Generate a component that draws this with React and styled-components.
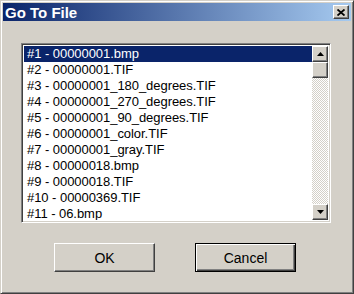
import React from "react";
import styled, { createGlobalStyle } from "styled-components";

const GlobalStyle = createGlobalStyle`
  html, body {
    margin: 0;
    padding: 0;
    background: #d4d0c8;
  }
  body {
    font-family: "Liberation Sans", Arial, sans-serif;
  }
`;

const Window = styled.div`
  box-sizing: border-box;
  width: 354px;
  height: 294px;
  background: #d4d0c8;
  border: 1px solid;
  border-color: #d4d0c8 #404040 #404040 #d4d0c8;
  box-shadow: inset 1px 1px 0 #fff, inset -1px -1px 0 #808080;
  padding: 2px;
  display: flex;
  flex-direction: column;
`;

const TitleBar = styled.div`
  height: 18px;
  background: linear-gradient(to right, #0a246a, #a6caf0);
  display: flex;
  align-items: center;
  justify-content: space-between;
  padding: 0 2px 0 2px;
`;

const Title = styled.span`
  color: #fff;
  font-weight: bold;
  font-size: 15px;
`;

const Raised = styled.div`
  box-sizing: border-box;
  background: #d4d0c8;
  border: 1px solid;
  border-color: #fff #404040 #404040 #fff;
  box-shadow: inset -1px -1px 0 #808080;
  display: flex;
  align-items: center;
  justify-content: center;
`;

const CloseButton = styled(Raised)`
  width: 16px;
  height: 14px;
`;

const Body = styled.div`
  flex: 1;
  display: flex;
  flex-direction: column;
  padding: 22px 20px 0 18px;
  gap: 20px;
`;

const ListBox = styled.div`
  box-sizing: border-box;
  height: 180px;
  border: 1px solid;
  border-color: #808080 #fff #fff #808080;
  box-shadow: inset 1px 1px 0 #404040, inset -1px -1px 0 #d4d0c8;
  padding: 2px;
  display: flex;
  background: #fff;
`;

const Items = styled.ul`
  flex: 1;
  list-style: none;
  margin: 0;
  padding: 0;
  overflow: hidden;
`;

const Item = styled.li`
  height: 16px;
  line-height: 16px;
  padding-left: 3px;
  font-size: 13px;
  letter-spacing: -0.05px;
  white-space: nowrap;
  color: ${(p) => (p.$selected ? "#fff" : "#000")};
  background: ${(p) => (p.$selected ? "#0a246a" : "transparent")};
`;

const ScrollBar = styled.div`
  width: 16px;
  display: flex;
  flex-direction: column;
  background-image: conic-gradient(#fff 90deg, #d4d0c8 90deg 180deg, #fff 180deg 270deg, #d4d0c8 270deg);
  background-size: 2px 2px;
`;

const ScrollButton = styled(Raised)`
  width: 16px;
  height: 16px;
  flex: none;
`;

const Track = styled.div`
  flex: 1;
`;

const ButtonRow = styled.div`
  display: flex;
  gap: 40px;
  padding-left: 33px;
`;

const Button = styled(Raised)`
  width: 101px;
  height: 29px;
  font-size: 14px;
  color: #000;
  ${(p) =>
    p.$default &&
    `
    border: 1px solid #000;
    box-shadow: inset 1px 1px 0 #fff, inset -1px -1px 0 #404040, inset -2px -2px 0 #808080;
  `}
`;

const files = [
  "00000001.bmp",
  "00000001.TIF",
  "00000001_180_degrees.TIF",
  "00000001_270_degrees.TIF",
  "00000001_90_degrees.TIF",
  "00000001_color.TIF",
  "00000001_gray.TIF",
  "00000018.bmp",
  "00000018.TIF",
  "00000369.TIF",
  "06.bmp",
];

const Arrow = ({ down }) => (
  <svg width="7" height="4" viewBox="0 0 7 4">
    <path d={down ? "M0 0H7L3.5 4Z" : "M0 4H7L3.5 0Z"} fill="#000" />
  </svg>
);

const App = () => {
  return (
    <>
      <GlobalStyle />
      <Window>
        <TitleBar>
          <Title>Go To File</Title>
          <CloseButton>
            <svg width="8" height="7" viewBox="0 0 8 7">
              <path d="M0.5 0.5L7.5 6.5M7.5 0.5L0.5 6.5" stroke="#000" strokeWidth="1.8" />
            </svg>
          </CloseButton>
        </TitleBar>
        <Body>
          <ListBox>
            <Items>
              {files.map((f, i) => (
                <Item key={i} $selected={i === 0}>
                  #{i + 1} - {f}
                </Item>
              ))}
            </Items>
            <ScrollBar>
              <ScrollButton>
                <Arrow />
              </ScrollButton>
              <ScrollButton />
              <Track />
              <ScrollButton>
                <Arrow down />
              </ScrollButton>
            </ScrollBar>
          </ListBox>
          <ButtonRow>
            <Button>OK</Button>
            <Button $default>Cancel</Button>
          </ButtonRow>
        </Body>
      </Window>
    </>
  );
};

export default App;
